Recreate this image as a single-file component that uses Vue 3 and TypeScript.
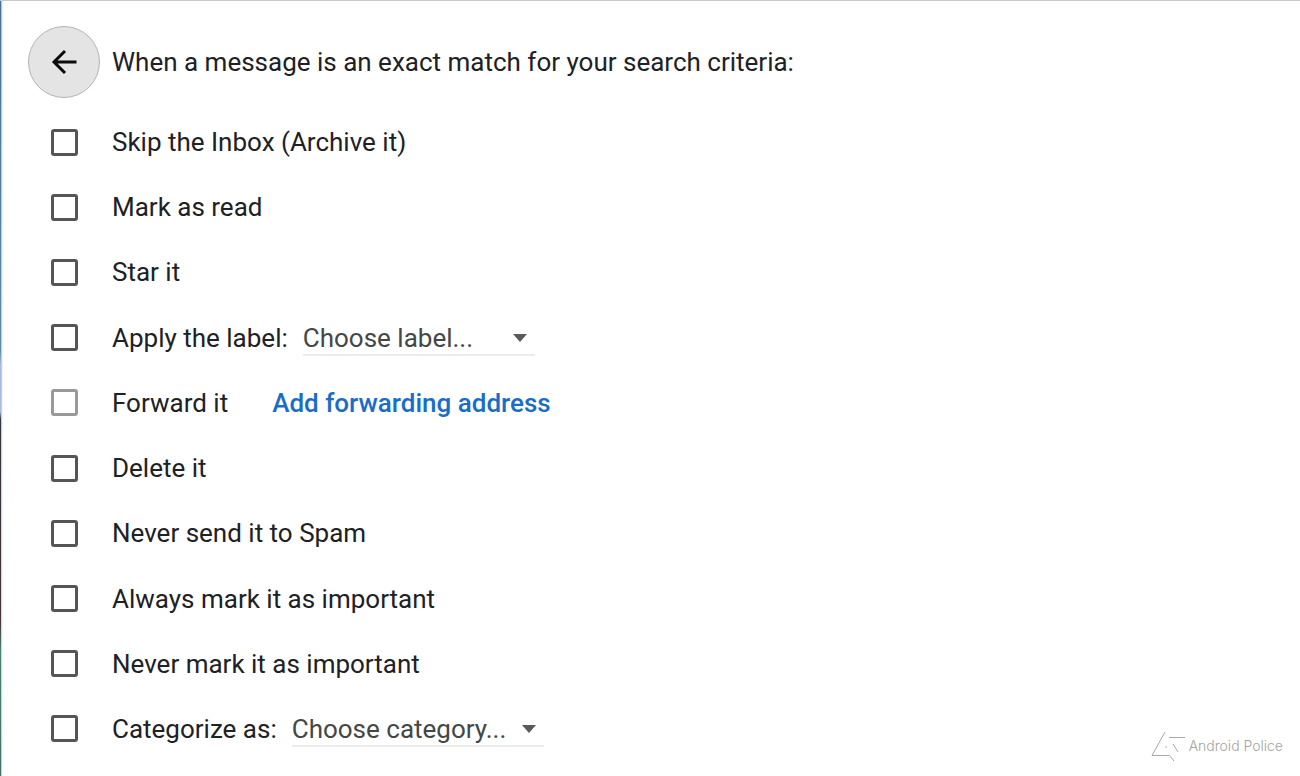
<script setup lang="ts">
import { ref } from 'vue'

interface Choice {
  name: string
  placeholder: string
  options: string[]
  size: 'narrow' | 'wide'
}

interface FilterAction {
  id: string
  text: string
  disabled?: boolean
  link?: string
  choice?: Choice
}

const actions: FilterAction[] = [
  { id: 'archive', text: 'Skip the Inbox (Archive it)' },
  { id: 'read', text: 'Mark as read' },
  { id: 'star', text: 'Star it' },
  {
    id: 'label',
    text: 'Apply the label:',
    choice: { name: 'Label', placeholder: 'Choose label...', options: [], size: 'narrow' },
  },
  { id: 'forward', text: 'Forward it', disabled: true, link: 'Add forwarding address' },
  { id: 'delete', text: 'Delete it' },
  { id: 'never-spam', text: 'Never send it to Spam' },
  { id: 'important', text: 'Always mark it as important' },
  { id: 'not-important', text: 'Never mark it as important' },
  {
    id: 'category',
    text: 'Categorize as:',
    choice: { name: 'Category', placeholder: 'Choose category...', options: [], size: 'wide' },
  },
]

const checked = ref<string[]>([])
</script>

<template>
  <main class="panel">
    <header class="head">
      <button class="back" type="button" aria-label="Back">
        <svg viewBox="0 0 28 28" width="28" height="28" aria-hidden="true">
          <path d="M26.500 14H4.500M15 3L4 14L15 25" fill="none" stroke="#0b0b0b" stroke-width="3" />
        </svg>
      </button>
      <h1 class="title">When a message is an exact match for your search criteria:</h1>
    </header>

    <ul class="actions">
      <li v-for="action in actions" :key="action.id" class="row">
        <input
          :id="action.id"
          v-model="checked"
          class="box"
          type="checkbox"
          :value="action.id"
          :disabled="action.disabled"
        />
        <div class="content">
          <label :for="action.id">{{ action.text }}</label>
          <span v-if="action.choice" class="picker" :class="action.choice.size">
            <select class="select" :aria-label="action.choice.name">
              <option>{{ action.choice.placeholder }}</option>
              <option v-for="option in action.choice.options" :key="option">{{ option }}</option>
            </select>
            <svg class="caret" viewBox="0 0 14 8" width="14" height="8" aria-hidden="true">
              <path d="M0 0H14L7 8Z" fill="#5a5a5a" />
            </svg>
          </span>
          <a v-if="action.link" class="link" href="#">{{ action.link }}</a>
        </div>
      </li>
    </ul>

    <div class="credit">
      <svg viewBox="0 0 34 30" width="34" height="30" aria-hidden="true">
        <g fill="none" stroke="#a8a8a8" stroke-width="1">
          <path d="M14 1L1 24.500H18.500L23 30M18 6.500H34M22 13L27 21" />
          <path d="M14 16H16" />
        </g>
      </svg>
      <span>Android Police</span>
    </div>
  </main>
</template>

<style>
body {
  margin: 0;
}
</style>

<style scoped>
.panel {
  position: relative;
  box-sizing: border-box;
  min-height: 100vh;
  display: flex;
  flex-direction: column;
  padding: 25px 28px 29px;
  border-top: 1px solid #cacaca;
  background:
    linear-gradient(#4b7096, #5d8fa8 45%, #a9bbdc 47%, #a9bbdc 53%, #35353b 54%, #4a3539 80%, #4a8273 84%, #456f64) left / 1px 100% no-repeat,
    linear-gradient(#a9c6e2, #b4d4e0 50%, #d8d0d2 60%, #e2d5cf 80%, #bcdad0) left / 2px 100% no-repeat,
    linear-gradient(#e6f1fa, #f6faf9) left / 3px 100% no-repeat,
    #fff;
  color: #202124;
  font-family: Roboto, "Liberation Sans", sans-serif;
  font-size: 26px;
  line-height: 36px;
}

.head {
  display: flex;
  align-items: center;
  gap: 12px;
}

.back {
  flex: none;
  display: grid;
  place-items: center;
  width: 72px;
  height: 72px;
  padding: 0;
  border: 1px solid #b4b4b4;
  border-radius: 50%;
  background: #e4e4e4;
}

.title {
  margin: 0;
  font-size: inherit;
  font-weight: 400;
}

.actions {
  flex: 1;
  display: flex;
  flex-direction: column;
  justify-content: space-between;
  gap: 12px;
  margin: 26px 0 0;
  padding: 0;
  list-style: none;
}

.row {
  display: flex;
  align-items: center;
  gap: 12px;
}

.box {
  appearance: none;
  box-sizing: border-box;
  flex: none;
  width: 27px;
  height: 27px;
  margin: 0 22px 0 23px;
  border: 3px solid #555;
  border-radius: 3px;
  background: #fff;
}

.box:disabled {
  border-color: #999;
}

.box:checked {
  background: #555;
}

.content {
  display: flex;
  align-items: center;
  height: 36px;
}

.picker {
  display: flex;
  align-items: center;
  height: 36px;
  margin-left: 15px;
  box-shadow: inset 0 -2px #ececec;
}

.narrow {
  width: 232px;
}

.wide {
  width: 252px;
}

.select {
  appearance: none;
  flex: 1;
  min-width: 0;
  height: 36px;
  margin: 0 -24px 0 0;
  padding: 0 24px 0 0;
  border: 0;
  background: transparent;
  color: #444746;
  font: inherit;
}

.caret {
  flex: none;
  margin-right: 8px;
  pointer-events: none;
}

.link {
  margin-left: 44px;
  color: #1a6dc7;
  font-weight: 500;
  text-decoration: none;
}

.credit {
  position: absolute;
  right: 17px;
  bottom: 15px;
  display: flex;
  align-items: center;
  gap: 4px;
  color: #a3a3a3;
  font-family: Inter, sans-serif;
  font-size: 14px;
  font-weight: 300;
  line-height: 30px;
}
</style>
